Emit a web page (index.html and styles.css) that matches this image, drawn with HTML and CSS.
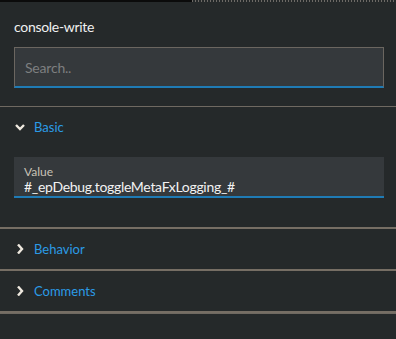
FILE: index.html
```html
<!DOCTYPE html>
<html lang="en">
<head>
    <meta charset="UTF-8">
    <title>console-write</title>
    <link rel="stylesheet" href="styles.css">
</head>
<body>
    <div class="top-bar">
        <div class="top-solid"></div>
        <div class="top-dots"></div>
    </div>

    <div class="header">
        <div class="title">console-write</div>
        <div class="search">
            <input type="text" placeholder="Search..">
        </div>
    </div>

    <div class="section thick">
        <div class="section-head">
            <svg class="chev" width="10" height="10" viewBox="0 0 10 10"><path d="M1 3 L5 7 L9 3" fill="none" stroke="#efe9df" stroke-width="2.4"/></svg>
            <span>Basic</span>
        </div>
        <div class="field">
            <div class="field-label">Value</div>
            <div class="field-value">#_epDebug.toggleMetaFxLogging_#</div>
        </div>
    </div>

    <div class="section thick">
        <div class="section-head">
            <svg class="chev" width="10" height="10" viewBox="0 0 10 10"><path d="M3 0.5 L7 5 L3 9.5" fill="none" stroke="#efe9df" stroke-width="2.4"/></svg>
            <span>Behavior</span>
        </div>
    </div>

    <div class="section thick">
        <div class="section-head">
            <svg class="chev" width="10" height="10" viewBox="0 0 10 10"><path d="M3 0.5 L7 5 L3 9.5" fill="none" stroke="#efe9df" stroke-width="2.4"/></svg>
            <span>Comments</span>
        </div>
    </div>

    <div class="section"></div>
</body>
</html>
```
FILE: styles.css
```css
body {
    margin: 0;
    height: 339px;
    overflow: hidden;
    background: #25292a;
    font-family: Lato, "Noto Sans", sans-serif;
    color: #e6e6e6;
}

.top-bar {
    display: flex;
    height: 2px;
}

.top-solid {
    width: 192px;
    background: #0b0b0b;
}

.top-dots {
    flex: 1;
    background: repeating-linear-gradient(90deg, #6d6a66 0 1px, transparent 1px 3px);
}

.header {
    padding: 16px 12px 18px 14px;
    border-bottom: 1px solid #6f6961;
}

.title {
    font-size: 14px;
    line-height: 18px;
    letter-spacing: -0.3px;
    color: #f0f0f0;
}

.search {
    margin-top: 11px;
    height: 38px;
    border: 1px solid #6b6660;
    border-bottom: 2px solid #1f7bb5;
    background: #35393c;
    display: flex;
    align-items: center;
}

.search input {
    flex: 1;
    border: none;
    background: transparent;
    outline: none;
    padding: 0 10px;
    font-family: inherit;
    font-size: 14px;
    letter-spacing: -0.2px;
    color: #ddd;
}

.search input::placeholder {
    color: #7d7f80;
}

.section {
    border-bottom: 1px solid #6f6961;
}

.section.thick {
    border-bottom: 2px solid #766e64;
}

.section-head {
    height: 40px;
    display: flex;
    align-items: center;
    padding-left: 15px;
    gap: 9px;
    font-size: 13px;
    color: #2b9be6;
}

.field {
    margin: 10px 12px 29px 14px;
    background: #35393c;
    border-bottom: 2px solid #1f7bb5;
    padding: 7px 10px 1px 10px;
}

.field-label {
    font-size: 12px;
    line-height: 15px;
    color: #c8c2b6;
}

.field-value {
    font-size: 14px;
    line-height: 16px;
    letter-spacing: -0.3px;
    color: #f2f2f2;
}
```
